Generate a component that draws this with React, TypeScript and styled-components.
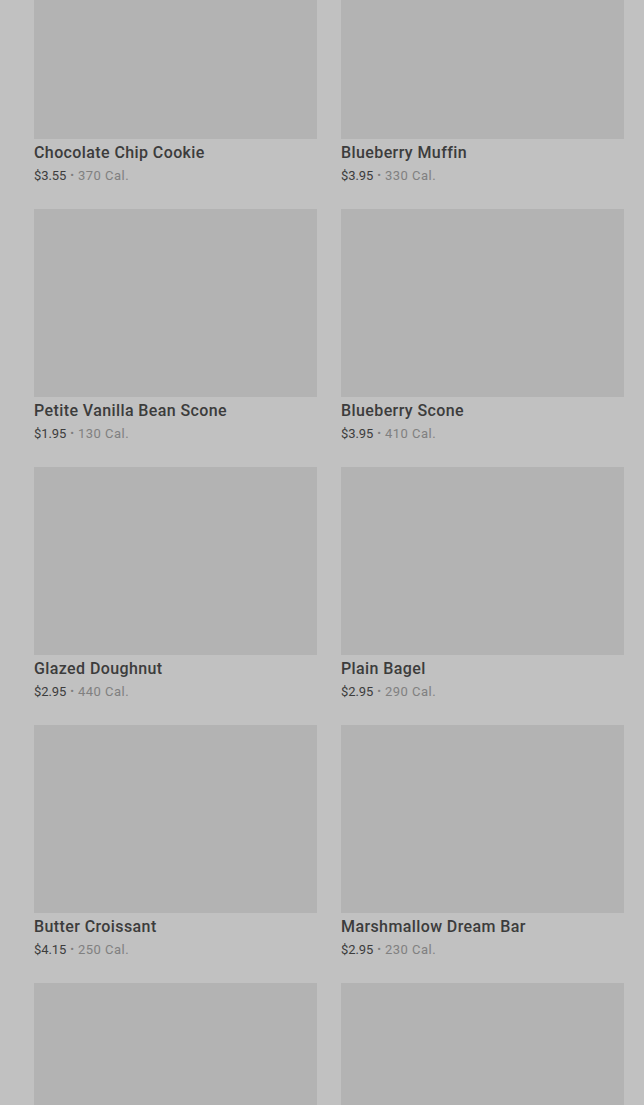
import styled, { createGlobalStyle } from 'styled-components';

const GlobalStyle = createGlobalStyle`
  html, body {
    margin: 0;
    padding: 0;
    background: #c1c1c1;
    overflow: hidden;
  }
  body {
    font-family: Roboto, 'Liberation Sans', sans-serif;
  }
`;

interface Product {
  name: string;
  price: string;
  calories: number;
}

const products: Product[] = [
  { name: 'Chocolate Chip Cookie', price: '$3.55', calories: 370 },
  { name: 'Blueberry Muffin', price: '$3.95', calories: 330 },
  { name: 'Petite Vanilla Bean Scone', price: '$1.95', calories: 130 },
  { name: 'Blueberry Scone', price: '$3.95', calories: 410 },
  { name: 'Glazed Doughnut', price: '$2.95', calories: 440 },
  { name: 'Plain Bagel', price: '$2.95', calories: 290 },
  { name: 'Butter Croissant', price: '$4.15', calories: 250 },
  { name: 'Marshmallow Dream Bar', price: '$2.95', calories: 230 },
];

const loadingCount = 2;

const App = () => {
  return (
    <>
      <GlobalStyle />
      <Page>
        <Grid>
          {products.map((p) => (
            <Card key={p.name}>
              <Thumb />
              <Title>{p.name}</Title>
              <Meta>
                <Price>{p.price}</Price>
                <Dot>•</Dot>
                <Cal>{p.calories} Cal.</Cal>
              </Meta>
            </Card>
          ))}
          {Array.from({ length: loadingCount }).map((_, i) => (
            <Card key={`loading-${i}`}>
              <Thumb />
            </Card>
          ))}
        </Grid>
      </Page>
    </>
  );
};

export default App;

const Page = styled.div`
  height: 1105px;
  overflow: hidden;
  padding: 0 20px 0 34px;
`;

const Grid = styled.div`
  display: grid;
  grid-template-columns: 283px 283px;
  column-gap: 24px;
  row-gap: 24px;
  margin-top: -49px;
`;

const Card = styled.div`
  display: flex;
  flex-direction: column;
`;

const Thumb = styled.div`
  height: 188px;
  background: #b3b3b3;
`;

const Title = styled.div`
  margin-top: 2px;
  font-size: 16px;
  line-height: 24px;
  font-weight: 500;
  color: #3c3c3c;
  letter-spacing: 0.4px;
`;

const Meta = styled.div`
  display: flex;
  align-items: center;
  gap: 4px;
  margin-top: 1px;
  margin-bottom: -1px;
  font-size: 13px;
  line-height: 20px;
`;

const Price = styled.span`
  color: #3d3d3d;
  letter-spacing: -0.1px;
`;

const Dot = styled.span`
  color: #7e7e7e;
  font-size: 11px;
`;

const Cal = styled.span`
  color: #808080;
  letter-spacing: 0.5px;
`;
